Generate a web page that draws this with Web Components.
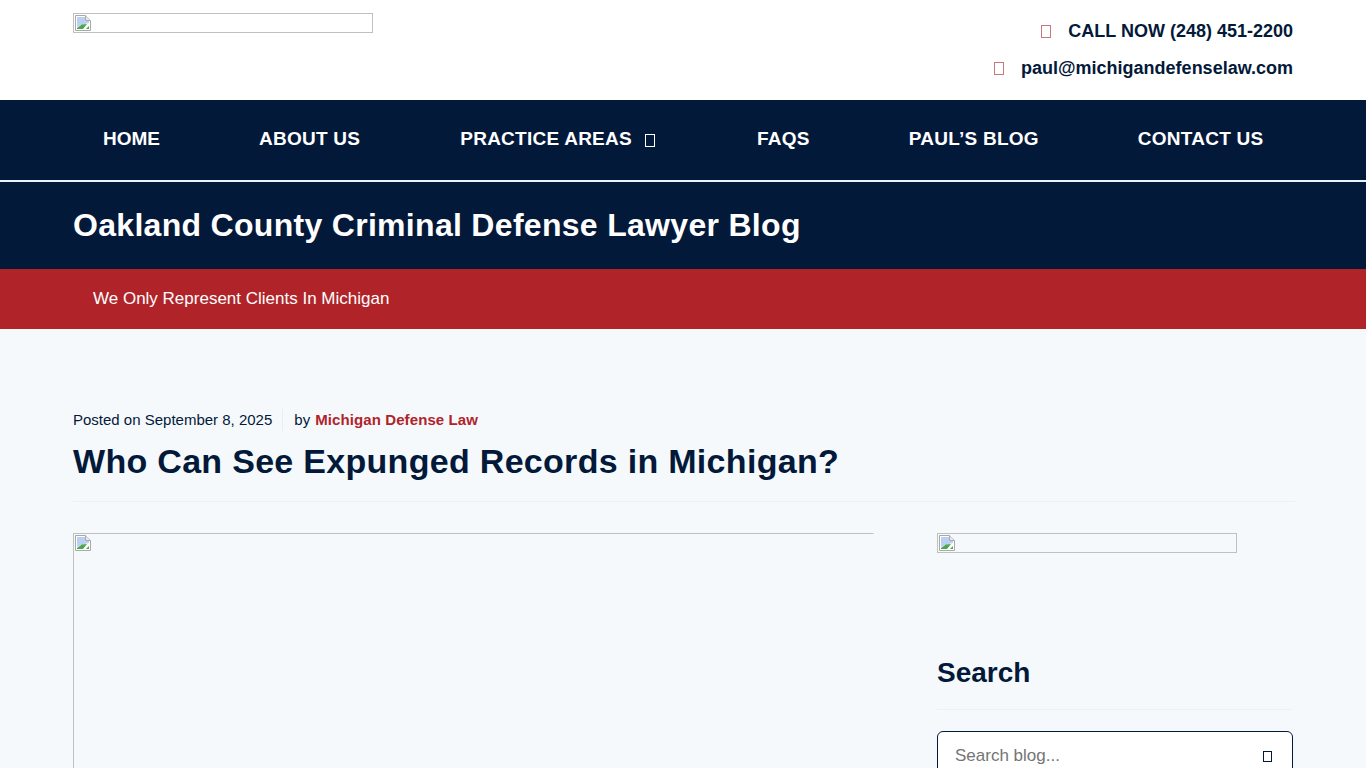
<!DOCTYPE html>
<html lang="en">
<head>
<meta charset="utf-8">
<title>Who Can See Expunged Records in Michigan?</title>
<style>
    html, body { margin: 0; padding: 0; height: 768px; overflow: hidden; }
    body { background: #f6f9fc; color: #03193a; font-family: "Liberation Sans", Arial, sans-serif; }
</style>
</head>
<body>

<site-header phone="CALL NOW (248) 451-2200" email="paul@michigandefenselaw.com"></site-header>
<site-nav>
    <nav-item style="letter-spacing:0">HOME</nav-item>
    <nav-item>ABOUT US</nav-item>
    <nav-item caret style="margin-left:1px">PRACTICE AREAS</nav-item>
    <nav-item style="margin-left:3px">FAQS</nav-item>
    <nav-item>PAUL’S BLOG</nav-item>
    <nav-item>CONTACT US</nav-item>
</site-nav>
<blog-banner title-text="Oakland County Criminal Defense Lawyer Blog" tagline="We Only Represent Clients In Michigan"></blog-banner>
<post-page>
    <post-head slot="head" date="September 8, 2025" author="Michigan Defense Law">Who Can See Expunged Records in Michigan?</post-head>
    <!-- the big image shows no right edge on the original -->
    <broken-img slot="main" style="width:801px;height:400px;border-right-color:transparent"></broken-img>
    <broken-img slot="side" style="width:300px;height:20px"></broken-img>
    <search-widget slot="side"></search-widget>
</post-page>

<script>
// missing glyph box, the icon font never loaded on the original
class TofuBox extends HTMLElement {
    constructor() {
        super();
        this.attachShadow({mode: 'open'});
        this.shadowRoot.innerHTML = `
            <style>
                :host {
                    display: inline-block;
                    box-sizing: border-box;
                    width: var(--tofu-w, 10px);
                    height: var(--tofu-h, 13px);
                    border: 1px solid currentColor;
                    flex: none;
                }
            </style>`;
    }
}

class BrokenImg extends HTMLElement {
    constructor() {
        super();
        this.attachShadow({mode: 'open'});
        this.shadowRoot.innerHTML = `
            <style>
                :host {
                    display: block;
                    box-sizing: border-box;
                    border: 1px solid #c0c0c0;
                    padding: 1px;
                    overflow: hidden;
                }
                svg { display: block; }
            </style>
            <svg width="16" height="16" viewBox="0 0 16 16">
                <path d="M.5.5h10l5 5v10H.5z" fill="#fff" stroke="#a9a9a9"/>
                <path d="M10.500.5v5h5" fill="#e8e8e8" stroke="#a9a9a9"/>
                <path d="M2 2h8v4h4v2L8 9.500 2 12z" fill="#b9d0f2"/>
                <path d="M2 14v-1l5-3.500 5-.5-4 5z" fill="#4ca64c"/>
                <path d="M11 14l3-3v3z" fill="#4ca64c"/>
            </svg>`;
    }
}

class SiteHeader extends HTMLElement {
    constructor() {
        super();
        this.attachShadow({mode: 'open'});
        this.shadowRoot.innerHTML = `
            <style>
                :host {
                    display: block;
                    height: 100px;
                    background: #fff;
                }
                .wrap {
                    width: 1220px;
                    margin: 0 auto;
                    display: flex;
                    justify-content: space-between;
                    padding-top: 13px;
                }
                .contact {
                    display: flex;
                    flex-direction: column;
                    align-items: flex-end;
                    gap: 16px;
                    padding-top: 8px;
                    font-size: 18px;
                    line-height: 21px;
                    font-weight: 700;
                    color: #03193a;
                }
                .row { display: flex; align-items: center; gap: 17px; }
                tofu-box { color: #c9787b; }
            </style>
            <div class="wrap">
                <broken-img style="width:300px;height:20px"></broken-img>
                <div class="contact">
                    <div class="row"><tofu-box></tofu-box><span>${this.getAttribute('phone')}</span></div>
                    <div class="row"><tofu-box></tofu-box><span>${this.getAttribute('email')}</span></div>
                </div>
            </div>`;
    }
}

class SiteNav extends HTMLElement {
    constructor() {
        super();
        this.attachShadow({mode: 'open'});
        this.shadowRoot.innerHTML = `
            <style>
                :host {
                    display: block;
                    height: 80px;
                    background: #03193a;
                    border-bottom: 2px solid #e8f4fa;
                }
                .wrap {
                    box-sizing: border-box;
                    width: 1220px;
                    height: 78px;
                    margin: 0 auto;
                    padding: 0 30px;
                    display: flex;
                    gap: 99px;
                    align-items: center;
                }
            </style>
            <div class="wrap"><slot></slot></div>`;
    }
}

class NavItem extends HTMLElement {
    constructor() {
        super();
        this.attachShadow({mode: 'open'});
        this.shadowRoot.innerHTML = `
            <style>
                :host {
                    display: flex;
                    flex: none;
                    align-items: center;
                    gap: 13px;
                    color: #fff;
                    font-size: 19px;
                    letter-spacing: .25px;
                    font-weight: 700;
                    line-height: 24px;
                    white-space: nowrap;
                }
                tofu-box { margin-top: 2px; }
            </style>
            <slot></slot>${this.hasAttribute('caret') ? '<tofu-box></tofu-box>' : ''}`;
    }
}

class BlogBanner extends HTMLElement {
    constructor() {
        super();
        this.attachShadow({mode: 'open'});
        this.shadowRoot.innerHTML = `
            <style>
                :host { display: block; color: #fff; }
                .title { background: #03193a; height: 87px; display: flex; align-items: center; }
                .tag { background: #b02429; height: 60px; display: flex; align-items: center; }
                .wrap { width: 1220px; margin: 0 auto; }
                h2 { margin: -2px 0 0; font-size: 32px; letter-spacing: .3px; line-height: 40px; font-weight: 700; }
                p { margin: 0; padding-left: 20px; font-size: 17px; line-height: 24px; }
            </style>
            <div class="title"><div class="wrap"><h2>${this.getAttribute('title-text')}</h2></div></div>
            <div class="tag"><div class="wrap"><p>${this.getAttribute('tagline')}</p></div></div>`;
    }
}

class PostPage extends HTMLElement {
    constructor() {
        super();
        this.attachShadow({mode: 'open'});
        this.shadowRoot.innerHTML = `
            <style>
                :host { display: block; }
                .wrap { width: 1220px; margin: 0 auto; padding-top: 80px; }
                .cols {
                    display: grid;
                    grid-template-columns: 801px 356px;
                    justify-content: space-between;
                    margin-top: 31px;
                }
                .side { display: flex; flex-direction: column; }
            </style>
            <div class="wrap">
                <slot name="head"></slot>
                <div class="cols">
                    <div><slot name="main"></slot></div>
                    <div class="side"><slot name="side"></slot></div>
                </div>
            </div>`;
    }
}

class PostHead extends HTMLElement {
    constructor() {
        super();
        this.attachShadow({mode: 'open'});
        this.shadowRoot.innerHTML = `
            <style>
                :host {
                    display: block;
                    border-bottom: 1px solid #eef1f4;
                    padding-bottom: 19px;
                    width: 1222px;
                }
                .meta {
                    display: flex;
                    align-items: center;
                    font-size: 15px;
                    line-height: 22px;
                }
                .date { padding-right: 10px; border-right: 1px solid #eaedf0; margin-right: 11px; }
                b { color: #b02429; margin-left: 5px; letter-spacing: .1px; }
                h1 {
                    margin: 9px 0 0;
                    font-size: 34px;
                    letter-spacing: .3px;
                    line-height: 42px;
                    font-weight: 700;
                }
            </style>
            <div class="meta">
                <span class="date">Posted on ${this.getAttribute('date')}</span>
                <span>by<b>${this.getAttribute('author')}</b></span>
            </div>
            <h1><slot></slot></h1>`;
    }
}

class SearchWidget extends HTMLElement {
    constructor() {
        super();
        this.attachShadow({mode: 'open'});
        this.shadowRoot.innerHTML = `
            <style>
                :host { display: block; margin-top: 104px; }
                h3 {
                    margin: 0;
                    font-size: 28px;
                    line-height: 32px;
                    font-weight: 700;
                    padding-bottom: 20px;
                    border-bottom: 1px solid #eef1f4;
                }
                .box {
                    box-sizing: border-box;
                    margin-top: 21px;
                    height: 50px;
                    background: #fff;
                    border: 1px solid #03193a;
                    border-radius: 6px;
                    padding: 0 20px 0 17px;
                    display: flex;
                    align-items: center;
                    justify-content: space-between;
                    font-size: 17px;
                    color: #757575;
                }
                tofu-box { color: #03193a; --tofu-w: 9px; --tofu-h: 11px; }
            </style>
            <h3>Search</h3>
            <div class="box"><span>Search blog...</span><tofu-box></tofu-box></div>`;
    }
}

customElements.define('tofu-box', TofuBox);
customElements.define('broken-img', BrokenImg);
customElements.define('site-header', SiteHeader);
customElements.define('site-nav', SiteNav);
customElements.define('nav-item', NavItem);
customElements.define('blog-banner', BlogBanner);
customElements.define('post-page', PostPage);
customElements.define('post-head', PostHead);
customElements.define('search-widget', SearchWidget);
</script>
</body>
</html>
